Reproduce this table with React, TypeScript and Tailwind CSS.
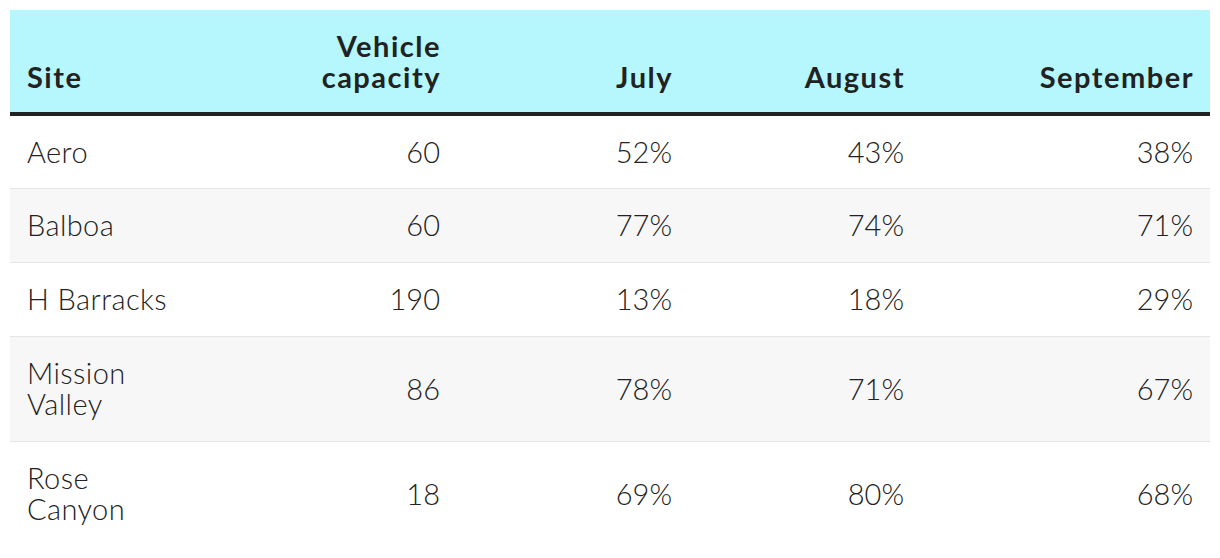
import React from 'react';

interface Row {
  site: string[];
  capacity: number;
  july: string;
  august: string;
  september: string;
}

const rows: Row[] = [
  { site: ['Aero'], capacity: 60, july: '52%', august: '43%', september: '38%' },
  { site: ['Balboa'], capacity: 60, july: '77%', august: '74%', september: '71%' },
  { site: ['H Barracks'], capacity: 190, july: '13%', august: '18%', september: '29%' },
  { site: ['Mission', 'Valley'], capacity: 86, july: '78%', august: '71%', september: '67%' },
  { site: ['Rose', 'Canyon'], capacity: 18, july: '69%', august: '80%', september: '68%' },
];

export default function App() {
  return (
    <div className="min-h-screen bg-white p-[10px] font-['Lato',sans-serif] text-[#222222]">
      <table className="w-[1200px] table-fixed border-collapse text-[29px] leading-[31px]">
        <colgroup>
          <col className="w-[210px]" />
          <col className="w-[236px]" />
          <col className="w-[232px]" />
          <col className="w-[232px]" />
          <col className="w-[290px]" />
        </colgroup>
        <thead>
          <tr className="bg-[#b5f7fd] border-b-4 border-[#222222]">
            <th className="pl-[17px] pr-4 py-5 text-left align-bottom font-bold tracking-[1.5px]">Site</th>
            <th className="pl-4 pr-[15px] py-5 text-right align-bottom font-bold tracking-[1.5px]">
              Vehicle
              <br />
              capacity
            </th>
            <th className="pl-4 pr-[15px] py-5 text-right align-bottom font-bold tracking-[1.5px]">July</th>
            <th className="pl-4 pr-[15px] py-5 text-right align-bottom font-bold tracking-[1.5px]">August</th>
            <th className="pl-4 pr-[16px] py-5 text-right align-bottom font-bold tracking-[1.5px]">September</th>
          </tr>
        </thead>
        <tbody>
          {rows.map((r, i) => {
            const pad = i === 0 ? 'pt-[20px] pb-[21px]' : 'pt-[20px] pb-[22px]';
            return (
              <tr
                key={r.site.join(' ')}
                className={`${i % 2 === 1 ? 'bg-[#f7f7f7]' : 'bg-white'} ${i < rows.length - 1 ? 'border-b border-[#e6e6e6]' : ''}`}
              >
                <td className={`pl-[17px] pr-4 ${pad} align-middle font-light tracking-[0.4px]`}>
                  {r.site.map((s, j) => (
                    <div key={j}>{s}</div>
                  ))}
                </td>
                <td className={`px-4 ${pad} text-right align-middle font-light`}>{r.capacity}</td>
                <td className={`px-4 ${pad} text-right align-middle font-light`}>{r.july}</td>
                <td className={`px-4 ${pad} text-right align-middle font-light`}>{r.august}</td>
                <td className={`pl-4 pr-[17px] ${pad} text-right align-middle font-light`}>{r.september}</td>
              </tr>
            );
          })}
        </tbody>
      </table>
    </div>
  );
}
